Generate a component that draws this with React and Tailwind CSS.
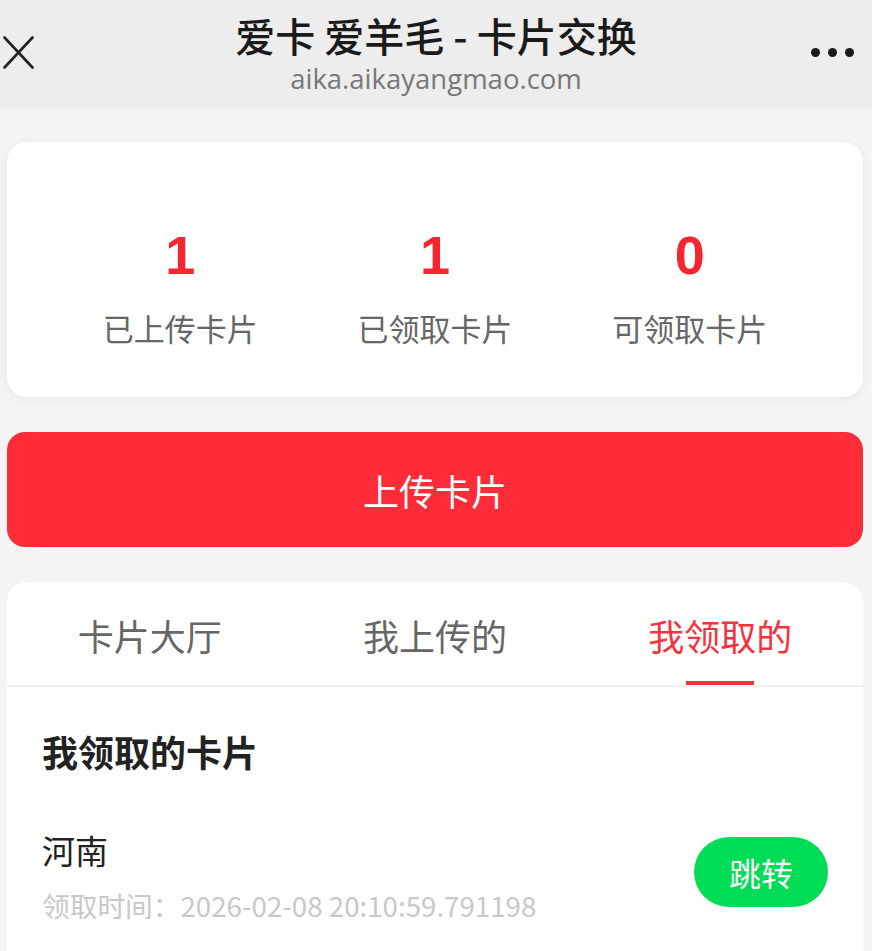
import React from "react"

const font = { fontFamily: '"Noto Sans CJK SC", "Noto Sans", sans-serif' }

function Stat({ value, label }) {
  return (
    <div className="flex flex-col items-center">
      <div className="text-[54px] font-bold leading-none text-[#f5262f]" style={{ fontFamily: '"Liberation Sans", "Noto Sans", sans-serif' }}>
        {value}
      </div>
      <div className="mt-[30px] text-[31px] leading-none text-[#666]">{label}</div>
    </div>
  )
}

export default function App() {
  const tabs = ["卡片大厅", "我上传的", "我领取的"]
  const active = 2

  return (
    <div className="min-h-[951px] bg-[#f4f4f4] overflow-hidden" style={font}>
      {/* top bar */}
      <div className="h-[108px] bg-[#ededed] flex items-center justify-between relative">
        <svg className="ml-[3px] mb-[4px]" width="31" height="33" viewBox="0 0 31 33" fill="none">
          <path d="M1.5 1.5 L29.5 31.5 M29.5 1.5 L1.5 31.5" stroke="#222" strokeWidth="2.6" strokeLinecap="round" />
        </svg>
        <div className="absolute left-0 right-0 top-0 flex flex-col items-center pointer-events-none">
          <div className="mt-[10px] text-[40px] leading-[50px] font-medium text-[#1a1a1a]">爱卡 爱羊毛 - 卡片交换</div>
          <div className="mt-[2px] text-[27.5px] leading-[34px] text-[#777]" style={{ fontFamily: '"Open Sans", "Noto Sans", sans-serif' }}>
            aika.aikayangmao.com
          </div>
        </div>
        <div className="flex gap-[8px] mr-[18px] mb-[4px]">
          <span className="w-[9px] h-[9px] rounded-full bg-[#1a1a1a]" />
          <span className="w-[9px] h-[9px] rounded-full bg-[#1a1a1a]" />
          <span className="w-[9px] h-[9px] rounded-full bg-[#1a1a1a]" />
        </div>
      </div>

      <div className="pl-[7px] pr-[9px]">
        {/* stats */}
        <div className="mt-[34px] h-[255px] bg-white rounded-[20px] shadow-[0_2px_10px_rgba(0,0,0,0.06)] grid grid-cols-3 px-[46px] pt-[86px]">
          <Stat value="1" label="已上传卡片" />
          <Stat value="1" label="已领取卡片" />
          <Stat value="0" label="可领取卡片" />
        </div>

        {/* upload button */}
        <button className="mt-[35px] w-full h-[115px] rounded-[18px] bg-[#fe2c38] text-white text-[36px] leading-none flex items-center justify-center">
          上传卡片
        </button>

        {/* tabs + list */}
        <div className="mt-[35px] bg-white rounded-t-[20px] min-h-[400px]">
          <div className="grid grid-cols-3 h-[105px] border-b-2 border-[#efefef]">
            {tabs.map((t, i) => (
              <div key={t} className="relative flex items-center justify-center">
                <span className={`text-[36px] leading-none mt-[2px] ${i === active ? "text-[#f5333f]" : "text-[#666]"}`}>{t}</span>
                {i === active && <span className="absolute bottom-0 left-1/2 -translate-x-1/2 w-[68px] h-[4px] bg-[#f5333f]" />}
              </div>
            ))}
          </div>

          <div className="px-[35px]">
            <div className="pt-[42px] text-[36px] leading-[44px] font-bold text-[#222]">我领取的卡片</div>
            <div className="mt-[56px] flex items-start justify-between">
              <div>
                <div className="text-[33px] leading-[42px] text-[#222]">河南</div>
                <div className="mt-[17px] text-[27.7px] leading-[34px] text-[#c8c8c8]">领取时间：2026-02-08 20:10:59.791198</div>
              </div>
              <button className="mt-[8px] w-[134px] h-[70px] rounded-full bg-[#00dc55] text-white text-[32px] leading-none flex items-center justify-center">
                跳转
              </button>
            </div>
          </div>
        </div>
      </div>
    </div>
  )
}
